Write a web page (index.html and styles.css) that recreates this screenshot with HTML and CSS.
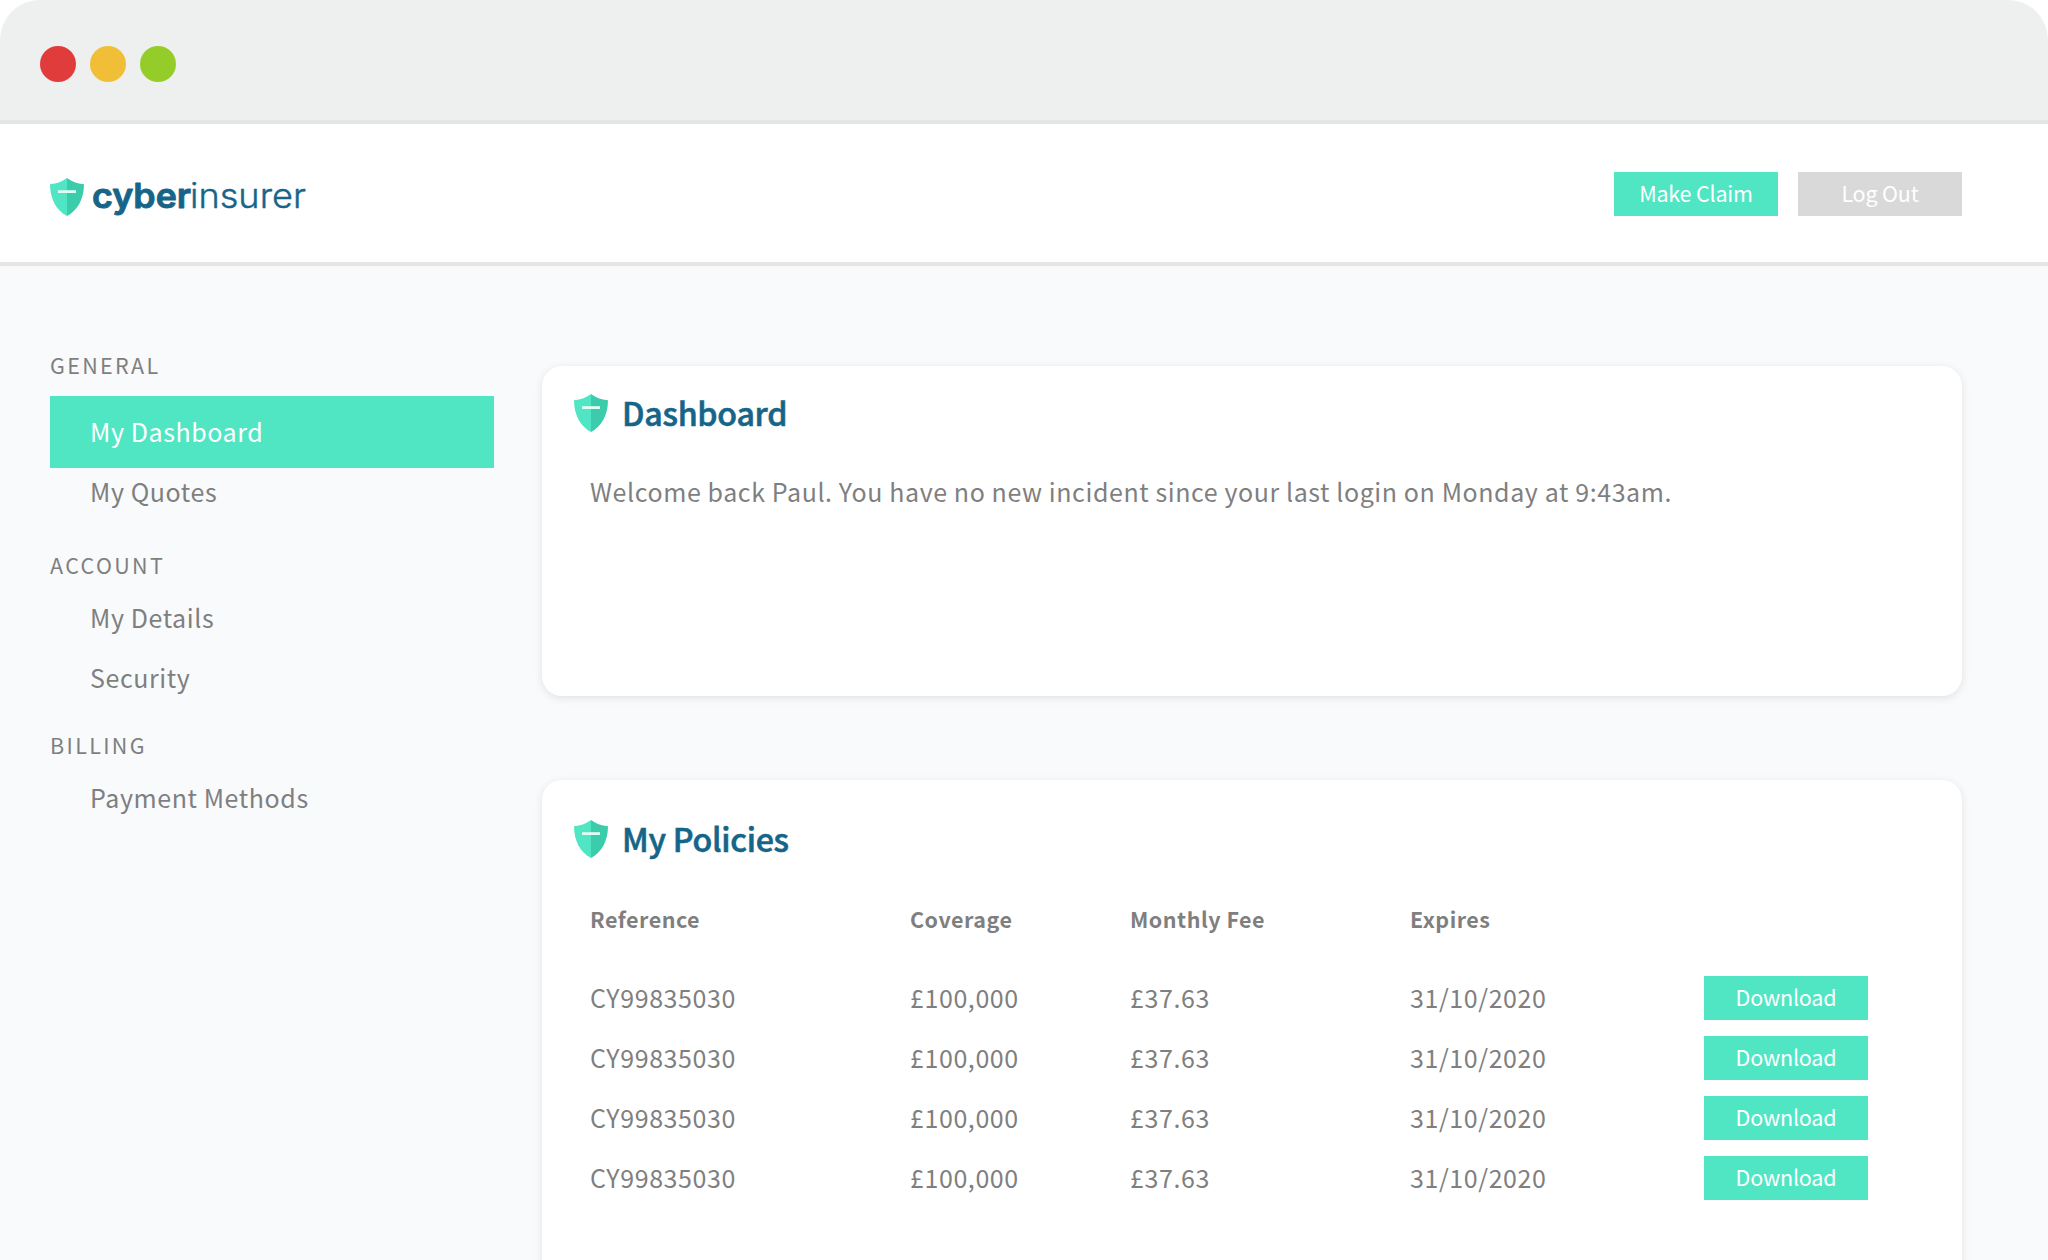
FILE: index.html
```html
<!DOCTYPE html>
<html lang="en">
<head>
<meta charset="utf-8">
<title>Cyberinsurer – Dashboard</title>
<link rel="stylesheet" href="styles.css">
</head>
<body>
<svg class="defs" width="0" height="0" aria-hidden="true">
  <symbol id="shield" viewBox="0 0 34 38">
    <path fill="#50e6c4" d="M17 0C12.500 3.400 7 5.600 0 6.200C0 21 6.500 32.500 17 38Z"/>
    <path fill="#3bcdab" d="M17 0C21.500 3.400 27 5.600 34 6.200C34 21 27.500 32.500 17 38Z"/>
    <path fill="#e2faf5" d="M8 12.200h18v2.800H8z"/>
  </symbol>
</svg>
<div class="window">
  <div class="titlebar">
    <span class="dot dot-red"></span>
    <span class="dot dot-yellow"></span>
    <span class="dot dot-green"></span>
  </div>
  <header class="header">
    <div class="brand">
      <svg class="shield"><use href="#shield"/></svg>
      <svg class="wordmark" width="224" height="60" viewBox="0 0 224 60">
        <text class="word-bold" x="0" y="39.500" textLength="99" lengthAdjust="spacingAndGlyphs">cyber</text>
        <text class="word-light" x="98" y="39.500" textLength="116" lengthAdjust="spacingAndGlyphs">insurer</text>
      </svg>
    </div>
    <div class="actions">
      <button class="btn">Make Claim</button>
      <button class="btn btn-muted">Log Out</button>
    </div>
  </header>
  <div class="body">
    <nav class="sidebar">
      <section class="group">
        <h3 class="label">GENERAL</h3>
        <a class="item active">My Dashboard</a>
        <a class="item after-active">My Quotes</a>
      </section>
      <section class="group">
        <h3 class="label">ACCOUNT</h3>
        <a class="item">My Details</a>
        <a class="item">Security</a>
      </section>
      <section class="group">
        <h3 class="label">BILLING</h3>
        <a class="item">Payment Methods</a>
      </section>
    </nav>
    <main class="main">
      <section class="card welcome">
        <h2 class="card-title"><svg class="shield"><use href="#shield"/></svg><span>Dashboard</span></h2>
        <p class="message">Welcome back Paul. You have no new incident since your last login on Monday at 9:43am.</p>
      </section>
      <section class="card policies">
        <h2 class="card-title"><svg class="shield"><use href="#shield"/></svg><span>My Policies</span></h2>
        <div class="table">
          <div class="row head"><span>Reference</span><span>Coverage</span><span>Monthly Fee</span><span>Expires</span></div>
          <div class="row"><span>CY99835030</span><span>£100,000</span><span>£37.63</span><span>31/10/2020</span><button class="btn">Download</button></div>
          <div class="row"><span>CY99835030</span><span>£100,000</span><span>£37.63</span><span>31/10/2020</span><button class="btn">Download</button></div>
          <div class="row"><span>CY99835030</span><span>£100,000</span><span>£37.63</span><span>31/10/2020</span><button class="btn">Download</button></div>
          <div class="row"><span>CY99835030</span><span>£100,000</span><span>£37.63</span><span>31/10/2020</span><button class="btn">Download</button></div>
        </div>
      </section>
    </main>
  </div>
</div>
</body>
</html>
```
FILE: styles.css
```css
* { box-sizing: border-box; }
body {
  margin: 0;
  background: #fff;
  color: #7f7f7f;
  font-family: "Noto Sans CJK SC", "Noto Sans CJK JP", "Open Sans", sans-serif;
  font-size: 25px;
  letter-spacing: .59px;
}
h2, h3, p { margin: 0; }
.defs { position: absolute; }
.window {
  height: 1260px;
  display: flex;
  flex-direction: column;
  overflow: hidden;
  border-radius: 40px 40px 0 0;
  background: #f9fafc;
}
.titlebar {
  flex: none;
  height: 124px;
  padding: 46px 40px 0;
  display: flex;
  gap: 14px;
  background: #eef0ef;
  border-bottom: 4px solid #e5e5e5;
}
.dot { width: 36px; height: 36px; border-radius: 50%; }
.dot-red { background: #e13c3c; }
.dot-yellow { background: #f0be37; }
.dot-green { background: #94cd2a; }
.header {
  flex: none;
  height: 142px;
  padding: 48px 86px 0 50px;
  display: flex;
  justify-content: space-between;
  align-items: flex-start;
  background: #fff;
  border-bottom: 4px solid #e5e5e5;
}
.brand { display: flex; gap: 8px; }
.brand .shield { margin-top: 6px; }
.shield { flex: none; width: 34px; height: 38px; display: block; }
.wordmark { font-family: Inter, sans-serif; font-size: 34.5px; letter-spacing: 0; margin-top: -4px; fill: #166589; }
.word-bold { font-weight: 600; stroke: #166589; stroke-width: .9px; stroke-linejoin: round; }
.word-light { font-weight: 300; stroke: #166589; stroke-width: .4px; stroke-linejoin: round; }
.actions { display: flex; gap: 20px; }
.btn {
  width: 164px;
  height: 44px;
  padding: 0 0 3px;
  border: 0;
  background: #50e6c4;
  color: #fff;
  font: inherit;
  font-size: 21.5px;
  line-height: 41px;
  letter-spacing: -.18px;
  text-align: center;
}
.btn-muted { background: #d9d9d9; }
.body {
  flex: 1;
  min-height: 0;
  padding: 0 86px 0 50px;
  display: grid;
  grid-template-columns: 444px 1420px;
  gap: 48px;
}
.sidebar { padding-top: 79px; }
.group { margin-bottom: 18px; }
.group:first-child { margin-bottom: 31px; }
.label { font-size: 21.5px; font-weight: 400; line-height: 40px; letter-spacing: 2.35px; margin-bottom: 2px; }
.group:first-child .label { margin-bottom: 11px; }
.item { display: block; padding-left: 40px; line-height: 60px; }
.item.active { height: 72px; line-height: 70px; background: #50e6c4; color: #fff; }
.item.after-active { line-height: 46px; }
.main { padding-top: 100px; display: flex; flex-direction: column; gap: 84px; }
.card {
  flex: none;
  background: #fff;
  border-radius: 20px;
  box-shadow: 0 2px 8px rgba(0, 0, 0, .1);
}
.welcome { height: 330px; padding: 28px 32px 0; }
.policies { height: 560px; padding: 40px 32px 0; }
.card-title {
  display: flex;
  gap: 14px;
  height: 38px;
  color: #166589;
  font-size: 32.2px;
  font-weight: 500;
  line-height: 36px;
  letter-spacing: -.27px;
  -webkit-text-stroke: .6px #166589;
}
.message { padding: 40px 0 0 16px; line-height: 38px; white-space: nowrap; }
.table { padding: 42px 16px 0; }
.row {
  display: grid;
  grid-template-columns: 320px 220px 280px 294px 164px;
  height: 44px;
  margin-bottom: 16px;
  line-height: 42px;
}
.row.head { height: 36px; line-height: 38px; margin-bottom: 40px; font-size: 21.5px; font-weight: 700; letter-spacing: .5px; }
```
